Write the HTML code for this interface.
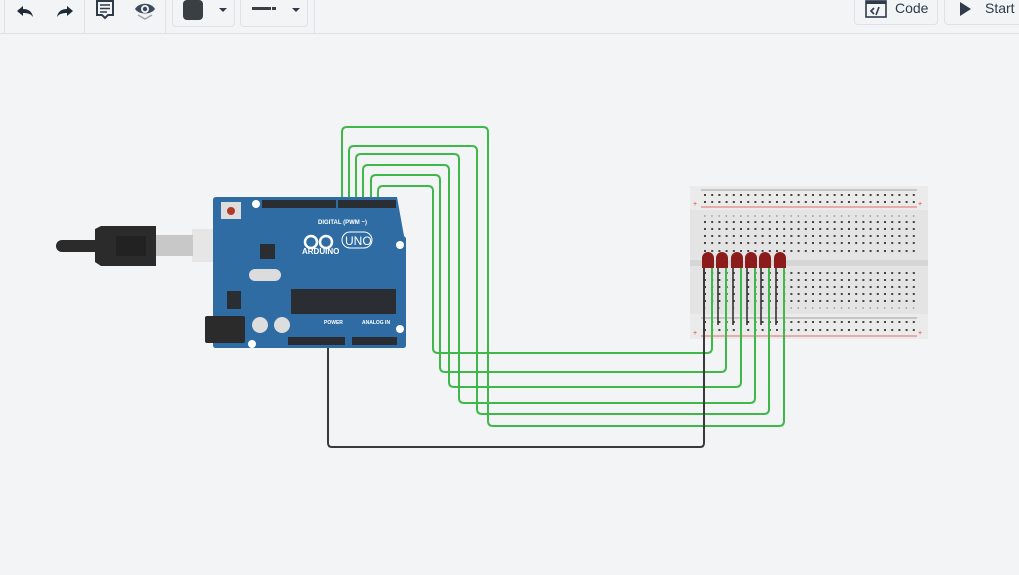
<!DOCTYPE html>
<html><head><meta charset="utf-8"><style>
html,body{margin:0;padding:0;width:1019px;height:575px;overflow:hidden;background:#f3f4f6;font-family:"Liberation Sans",sans-serif;}
.tb{position:absolute;left:0;top:0;width:1019px;height:33px;border-bottom:1px solid #dfe1e4;background:#f3f4f6;}
.sep{position:absolute;top:0;width:1px;height:33px;background:#dfe1e4;}
.dd{position:absolute;top:-1px;height:27px;border:1px solid #dfe1e4;border-top:none;border-radius:0 0 4px 4px;background:#f3f4f6;}
.btn{position:absolute;top:-1px;height:25px;border:1px solid #dfe1e4;border-top:none;border-radius:0 0 4px 4px;background:#f3f4f6;font-size:14px;color:#2f3b4a;}
</style></head><body>
<div class="tb">
  <div class="sep" style="left:4px"></div>
  <div class="sep" style="left:84px"></div>
  <div class="sep" style="left:165px"></div>
  <div class="sep" style="left:314px"></div>
  <svg style="position:absolute;left:0;top:0" width="320" height="33">
    <path d="M17 11 L23 6 L23 9 C28 9 32 11 33 17 C31 14 28 13 23 13 L23 16 Z" fill="#1f2a37"/>
    <path d="M73 11 L67 6 L67 9 C62 9 58 11 57 17 C59 14 62 13 67 13 L67 16 Z" fill="#1f2a37"/>
    <path d="M97 1 H113 V15 H108 L105 18 L102 15 H97 Z" fill="none" stroke="#2f3b4a" stroke-width="2"/>
    <path d="M100 5 H110 M100 8.5 H110 M100 12 H107" stroke="#2f3b4a" stroke-width="1.5"/>
    <path d="M135 9 C139 2 151 2 155 9 C151 15 139 15 135 9 Z" fill="#3b4a5c"/>
    <circle cx="145" cy="9" r="4" fill="#f3f4f6"/><circle cx="145" cy="9" r="2.2" fill="#3b4a5c"/>
    <path d="M138 15 L145 19 L152 15" fill="none" stroke="#9aa3ad" stroke-width="1.5"/>
  </svg>
  <div class="dd" style="left:172px;width:61px"></div>
  <div style="position:absolute;left:183px;top:0;width:20px;height:20px;background:#3a3f44;border-radius:4px"></div>
  <div style="position:absolute;left:219px;top:8px;border:4px solid transparent;border-top:4px solid #2f3b4a;"></div>
  <div class="dd" style="left:240px;width:66px"></div>
  <div style="position:absolute;left:252px;top:7px;width:19px;height:3px;background:#3a3f44"></div>
  <div style="position:absolute;left:272px;top:7px;width:4px;height:3px;background:#3a3f44"></div>
  <div style="position:absolute;left:292px;top:8px;border:4px solid transparent;border-top:4px solid #2f3b4a;"></div>
  <div class="btn" style="left:854px;width:82px">
    <svg style="position:absolute;left:10px;top:1px" width="22" height="18"><rect x="1" y="1" width="20" height="16" fill="none" stroke="#2f3b4a" stroke-width="1.6"/><rect x="1" y="1" width="20" height="3" fill="#2f3b4a"/><path d="M9 8 L6 11 L9 14 M14 7 L11 15" fill="none" stroke="#2f3b4a" stroke-width="1.6"/></svg>
    <span style="position:absolute;left:40px;top:1px">Code</span>
  </div>
  <div class="btn" style="left:944px;width:80px">
    <svg style="position:absolute;left:14px;top:2px" width="14" height="16"><path d="M1 1 L12 8 L1 15 Z" fill="#2f3b4a"/></svg>
    <span style="position:absolute;left:40px;top:1px">Start</span>
  </div>
</div>
<svg style="position:absolute;left:0;top:0" width="1019" height="575">
  <!-- breadboard -->
  <rect x="690" y="186" width="238" height="153" rx="2" fill="#e4e4e4"/>
  <rect x="690" y="186" width="238" height="24" fill="#ebebeb"/>
  <rect x="690" y="314" width="238" height="25" fill="#ebebeb"/>
  <line x1="701" y1="190" x2="917" y2="190" stroke="#888" stroke-width="0.8"/>
  <line x1="701" y1="207" x2="917" y2="207" stroke="#d44" stroke-width="0.8"/>
  <line x1="701" y1="318" x2="917" y2="318" stroke="#888" stroke-width="0.8"/>
  <line x1="701" y1="336" x2="917" y2="336" stroke="#d44" stroke-width="0.8"/>
  <rect x="690" y="260" width="238" height="6" fill="#d6d6d6"/>
  <g stroke="#444" stroke-width="2" stroke-dasharray="2 5.2">
    <line x1="704" y1="195" x2="916" y2="195"/>
    <line x1="704" y1="202" x2="916" y2="202"/>
    <line x1="704" y1="222" x2="916" y2="222"/>
    <line x1="704" y1="229" x2="916" y2="229"/>
    <line x1="704" y1="236" x2="916" y2="236"/>
    <line x1="704" y1="243" x2="916" y2="243"/>
    <line x1="704" y1="251" x2="916" y2="251"/>
    <line x1="704" y1="273" x2="916" y2="273"/>
    <line x1="704" y1="280" x2="916" y2="280"/>
    <line x1="704" y1="287" x2="916" y2="287"/>
    <line x1="704" y1="294" x2="916" y2="294"/>
    <line x1="704" y1="301" x2="916" y2="301"/>
    <line x1="704" y1="322" x2="916" y2="322"/>
    <line x1="704" y1="330" x2="916" y2="330"/>
  </g>
  <g stroke="#999" stroke-width="1.5" stroke-dasharray="1.5 5.7">
    <line x1="704" y1="216" x2="916" y2="216"/>
    <line x1="704" y1="308" x2="916" y2="308"/>
  </g>
  <g fill="#d44" font-size="7" font-family="Liberation Sans"><text x="693" y="206">+</text><text x="918" y="206">+</text><text x="693" y="335">+</text><text x="918" y="335">+</text></g>
  <!-- LED legs -->
  <g stroke="#333" stroke-width="1.6">
    <line x1="704" y1="266" x2="704" y2="325"/><line x1="718" y1="266" x2="718" y2="325"/><line x1="733" y1="266" x2="733" y2="325"/><line x1="747" y1="266" x2="747" y2="325"/><line x1="761" y1="266" x2="761" y2="325"/><line x1="776" y1="266" x2="776" y2="325"/>
  </g>
  <!-- wires -->
  <g fill="none" stroke="#3fb84a" stroke-width="2">
    <path d="M342 204 V132 Q342 127 347 127 H483 Q488 127 488 132 V421 Q488 426 493 426 H779 Q784 426 784 421 V266"/>
    <path d="M349 204 V151 Q349 146 354 146 H472 Q477 146 477 151 V409 Q477 414 482 414 H764 Q769 414 769 409 V266"/>
    <path d="M356 204 V159 Q356 154 361 154 H454 Q459 154 459 159 V398 Q459 403 464 403 H750 Q755 403 755 398 V266"/>
    <path d="M363 204 V170 Q363 165 368 165 H444 Q449 165 449 170 V382 Q449 387 454 387 H736 Q741 387 741 382 V266"/>
    <path d="M371 204 V180 Q371 175 376 175 H435 Q440 175 440 180 V367 Q440 372 445 372 H721 Q726 372 726 367 V266"/>
    <path d="M378 204 V191 Q378 186 383 186 H428 Q433 186 433 191 V348 Q433 353 438 353 H707 Q712 353 712 348 V266"/>
  </g>
  <path d="M328 343 V443 Q328 447 332 447 H700 Q704 447 704 443 V266" fill="none" stroke="#3a3a3a" stroke-width="2"/>
  <!-- LEDs -->
  <g fill="#8c1c1c">
    <path d="M702 268 V258 A6 6 0 0 1 714 258 V268 Z"/><path d="M716 268 V258 A6 6 0 0 1 728 258 V268 Z"/><path d="M731 268 V258 A6 6 0 0 1 743 258 V268 Z"/><path d="M745 268 V258 A6 6 0 0 1 757 258 V268 Z"/><path d="M759 268 V258 A6 6 0 0 1 771 258 V268 Z"/><path d="M774 268 V258 A6 6 0 0 1 786 258 V268 Z"/>
  </g>
  <!-- USB -->
  <rect x="192" y="229" width="24" height="33" fill="#e6e6e6"/>
  <rect x="155" y="235" width="38" height="21" fill="#c8c8c8"/>
  <path d="M95 229 L101 226 H156 V266 H101 L95 262 Z" fill="#2b2b2b"/>
  <path d="M62 240 H95 V252 H62 A6 6 0 0 1 62 240 Z" fill="#2b2b2b"/>
  <rect x="116" y="236" width="30" height="20" fill="#222"/>
  <!-- Arduino -->
  <path d="M216 197 H397 L404 236 L406 238 V345 Q406 348 403 348 H216 Q213 348 213 345 V200 Q213 197 216 197 Z" fill="#2e6ca3"/>
  <rect x="262" y="200" width="74" height="8" fill="#2a2d31"/>
  <rect x="338" y="200" width="58" height="8" fill="#2a2d31"/>
  <rect x="288" y="337" width="57" height="8" fill="#2a2d31"/>
  <rect x="352" y="337" width="45" height="8" fill="#2a2d31"/>
  <rect x="291" y="289" width="105" height="25" fill="#2a2d31"/>
  <rect x="260" y="244" width="15" height="15" fill="#2a2d31"/>
  <rect x="221" y="202" width="20" height="17" fill="#ddd"/><circle cx="231" cy="211" r="4" fill="#b03a2a"/>
  <circle cx="256" cy="204" r="4" fill="#fff"/><circle cx="400" cy="245" r="4" fill="#fff"/><circle cx="400" cy="329" r="4" fill="#fff"/><circle cx="252" cy="344" r="4" fill="#fff"/>
  <rect x="249" y="269" width="32" height="12" rx="6" fill="#dcdcdc"/>
  <rect x="205" y="316" width="40" height="27" rx="2" fill="#2b2b2b"/>
  <circle cx="260" cy="325" r="8" fill="#ddd"/><circle cx="282" cy="325" r="8" fill="#ddd"/>
  <rect x="227" y="291" width="14" height="18" fill="#2a2d31"/>
  <g fill="#fff" font-family="Liberation Sans" font-weight="bold">
    <text x="302" y="254" font-size="8">ARDUINO</text>
    <text x="318" y="224" font-size="6">DIGITAL (PWM ~)</text>
    <text x="324" y="324" font-size="5">POWER</text>
    <text x="362" y="324" font-size="5">ANALOG IN</text>
  </g>
  <circle cx="311" cy="242" r="6" fill="none" stroke="#fff" stroke-width="2.5"/><circle cx="326" cy="242" r="6" fill="none" stroke="#fff" stroke-width="2.5"/>
  <rect x="342" y="232" width="30" height="16" rx="8" fill="none" stroke="#fff" stroke-width="1"/>
  <text x="345" y="245" font-size="12" fill="#fff" font-family="Liberation Sans">UNO</text>
</svg>
</body></html>
